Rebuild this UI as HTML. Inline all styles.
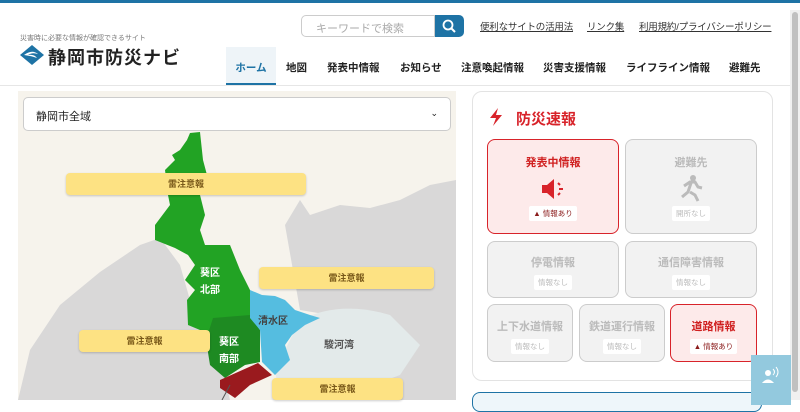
<!DOCTYPE html>
<html><head><meta charset="utf-8"><style>
*{margin:0;padding:0;box-sizing:border-box}
body{width:800px;height:400px;overflow:hidden;background:#fff;font-family:"Liberation Sans","Noto Sans CJK JP",sans-serif;position:relative;color:#222}
.a{position:absolute}
.top{left:0;top:0;width:800px;height:3px;background:#1e73a5}
.sub{left:20px;top:33px;font-size:7px;color:#777}
.logo{left:48px;top:44px;font-size:18px;font-weight:bold;letter-spacing:1px}
.search{left:301px;top:15px;width:134px;height:22px;border:1px solid #ccc;border-radius:5px 0 0 5px;font-size:11px;color:#aaa;padding:4px 14px}
.sbtn{left:435px;top:15px;width:29px;height:22px;background:#1e73a5;border-radius:0 5px 5px 0}
.lk{top:19px;font-size:9.5px;color:#333;text-decoration:underline;letter-spacing:-0.2px}
.nav{top:60px;font-size:10.5px;font-weight:bold}
.home{left:226px;top:47px;width:50px;height:38px;background:#eef4f8;border-bottom:2px solid #1e73a5;color:#1e73a5;font-size:10.5px;font-weight:bold;text-align:center;padding-top:13px}
.hl{left:0;top:85px;width:790px;height:1px;background:#e6e6e6}
.map{left:18px;top:91px;width:438px;height:309px;background:#f6f3ec;overflow:hidden}
.sel{left:23px;top:97px;width:428px;height:34px;background:#fff;border:1px solid #ccc;border-radius:5px;font-size:11px;padding:10px 12px}
.lab{background:#fde283;border-radius:4px;font-size:9px;font-weight:bold;color:#7a5a1a;text-align:center;height:22px;line-height:22px;box-shadow:0 1px 2px rgba(0,0,0,.2)}
.panel{left:472px;top:91px;width:301px;height:290px;border:1px solid #e3e3e3;border-radius:10px}
.card{border:1.5px solid #ccc;border-radius:8px;background:#f2f2f2;text-align:center;color:#bbb;font-size:11px;font-weight:bold}
.card.on{border-color:#d8232a;background:#fdeaea;color:#d02020}
.tag{display:inline-block;background:#fff;font-size:7.5px;padding:2px 4px;border-radius:2px;color:#bbb;font-weight:normal}
.on .tag{color:#8a1a1a}
.wh{color:#fff;font-size:10px;font-weight:bold;text-align:center;line-height:17px}
</style></head><body>
<div class="a top"></div>
<div class="a sub">災害時に必要な情報が確認できるサイト</div>
<svg class="a" style="left:20px;top:45px" width="24" height="20" viewBox="0 0 24 20"><path d="M12 0L24 10L12 20L0 10Z" fill="#1e73a5"/><path d="M4 10q8-6 14-1q-6-2-10 1q6-1 9 3q-5-2-13-3z" fill="#fff"/></svg>
<div class="a logo">静岡市防災ナビ</div>
<div class="a search">キーワードで検索</div>
<div class="a sbtn"><svg width="29" height="22"><circle cx="13" cy="10" r="4.5" stroke="#fff" stroke-width="1.8" fill="none"/><path d="M16 13l4 4" stroke="#fff" stroke-width="2"/></svg></div>
<div class="a lk" style="left:480px">便利なサイトの活用法</div>
<div class="a lk" style="left:587px">リンク集</div>
<div class="a lk" style="left:639px">利用規約/プライバシーポリシー</div>
<div class="a home">ホーム</div>
<div class="a nav" style="left:286px">地図</div>
<div class="a nav" style="left:327px">発表中情報</div>
<div class="a nav" style="left:400px">お知らせ</div>
<div class="a nav" style="left:461px">注意喚起情報</div>
<div class="a nav" style="left:543px">災害支援情報</div>
<div class="a nav" style="left:626px">ライフライン情報</div>
<div class="a nav" style="left:729px">避難先</div>
<div class="a hl"></div>
<div class="a" style="left:790px;top:10px;width:10px;height:390px;background:#f0f0f0"><div style="margin:2px 2px;width:6px;height:380px;background:#c0c0c0;border-radius:3px"></div></div>
<div class="a map"><svg width="438" height="309" viewBox="18 91 438 309">
<path d="M18 400L30 350L60 305L100 272L140 245L160 238L180 265L190 300L215 340L230 400Z" fill="#d9d8d8"/>
<path d="M285 225L300 200L310 215L340 205L370 208L400 200L430 185L456 180L456 400L380 400L360 320L300 310Z" fill="#d9d8d8"/>
<path d="M300 320Q340 300 390 315L420 345L400 375L360 390L330 400L280 400L275 370Z" fill="#e3eaea"/>
<path d="M190 133L200 132L203 160L207 175L200 195L205 215L200 230L205 245L230 245L240 270L250 290L250 318L240 325L215 332L200 330L188 325L187 300L195 290L185 280L195 265L188 255L175 248L155 240L155 225L170 205L168 195L165 170L175 160L172 155L180 150L187 140Z" fill="#22a324"/>
<path d="M213 318L250 315L260 330L260 362L245 365L225 378L210 365L206 340Z" fill="#1e8a22"/>
<path d="M220 380L258 363L272 375L250 385L235 398L220 388Z" fill="#9a1a1e"/>
<path d="M250 290L262 295L275 296L285 300L295 310L310 315L320 318L305 325L292 335L285 345L290 360L275 375L262 362L260 330L250 318Z" fill="#55bde0"/>
<path d="M230 385L222 400" stroke="#555" stroke-width="1"/>
</svg></div>
<div class="a sel">静岡市全域<span style="float:right;font-size:9px">⌄</span></div>
<div class="a lab" style="left:66px;top:173px;width:240px">雷注意報</div>
<div class="a lab" style="left:259px;top:267px;width:175px">雷注意報</div>
<div class="a lab" style="left:79px;top:330px;width:131px">雷注意報</div>
<div class="a lab" style="left:272px;top:378px;width:131px">雷注意報</div>
<div class="a wh" style="left:200px;top:265px">葵区<br>北部</div>
<div class="a wh" style="left:219px;top:334px">葵区<br>南部</div>
<div class="a" style="left:258px;top:312px;font-size:10px;font-weight:bold;color:#444">清水区</div>
<div class="a" style="left:324px;top:336px;font-size:10px;font-weight:bold;color:#555">駿河湾</div>
<div class="a panel"></div>
<svg class="a" style="left:488px;top:108px" width="16" height="18" viewBox="0 0 16 18"><path d="M10 0L2 10H8L5 18L14 7H8Z" fill="#d8232a"/></svg>
<div class="a" style="left:516px;top:108px;font-size:15px;font-weight:bold;color:#d8232a">防災速報</div>
<div class="a card on" style="left:487px;top:139px;width:132px;height:95px;padding-top:14px">発表中情報<br><svg width="30" height="26" viewBox="0 0 30 26" style="margin:6px 0 1px"><path d="M4 9h5l7-6v20l-7-6H4z" fill="#d8232a"/><path d="M20 7l2 2M21 13h4M20 19l2-2" stroke="#d8232a" stroke-width="2"/></svg><br><span class="tag">▲ 情報あり</span></div>
<div class="a card" style="left:625px;top:139px;width:132px;height:95px;padding-top:14px">避難先<br><svg width="30" height="30" viewBox="0 0 30 30" style="margin:3px 0 0"><circle cx="17" cy="5" r="3" fill="#bbb"/><path d="M8 13l6-4h5l3 5 4 1M15 10l-3 9-6 5M14 19l5 3 3 6" stroke="#bbb" stroke-width="3" fill="none"/></svg><br><span class="tag">開所なし</span></div>
<div class="a card" style="left:487px;top:241px;width:132px;height:57px;padding-top:12px">停電情報<br><span class="tag" style="margin-top:5px">情報なし</span></div>
<div class="a card" style="left:625px;top:241px;width:132px;height:57px;padding-top:12px">通信障害情報<br><span class="tag" style="margin-top:5px">情報なし</span></div>
<div class="a card" style="left:487px;top:304px;width:86px;height:58px;padding-top:13px">上下水道情報<br><span class="tag" style="margin-top:5px">情報なし</span></div>
<div class="a card" style="left:579px;top:304px;width:86px;height:58px;padding-top:13px">鉄道運行情報<br><span class="tag" style="margin-top:5px">情報なし</span></div>
<div class="a card on" style="left:670px;top:304px;width:87px;height:58px;padding-top:13px">道路情報<br><span class="tag" style="margin-top:5px">▲ 情報あり</span></div>
<div class="a" style="left:472px;top:392px;width:290px;height:20px;border:1.5px solid #1e73a5;border-radius:8px;background:#eef6fa"></div>
<div class="a" style="left:751px;top:355px;width:40px;height:50px;background:#93c9de"><svg width="40" height="40"><circle cx="17" cy="18" r="3" fill="#fff"/><path d="M11 28q6-7 12 0z" fill="#fff"/><path d="M22 14q3 3 0 6M25 12q4 5 0 10" stroke="#fff" fill="none"/></svg></div>
</body></html>
